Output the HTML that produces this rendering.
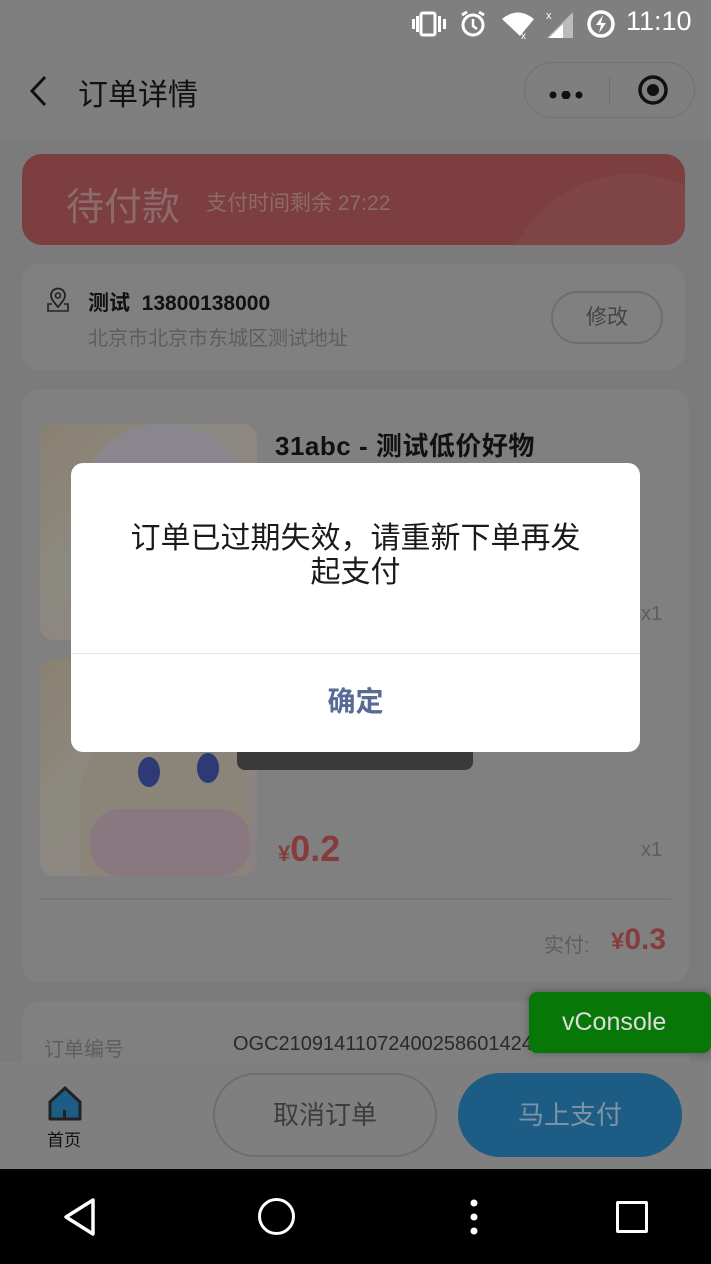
<!DOCTYPE html>
<html><head><meta charset="utf-8"><style>
*{margin:0;padding:0;box-sizing:border-box}
body{width:711px;height:1264px;overflow:hidden;position:relative;background:#7b7b7b;font-family:"Liberation Sans","Noto Sans CJK SC",sans-serif}
.a{position:absolute}
.card{position:absolute;background:#808080;border-radius:18px}
.img{position:absolute;border-radius:14px;background:linear-gradient(135deg,#8a8070 0%,#8c8a80 40%,#8a7f85 100%);overflow:hidden}
</style></head><body>
<div class="a" style="left:0;top:0;width:711px;height:140px;background:#7f7f7f"></div>
<!-- status bar -->
<div class="a" style="left:411px;top:10px;width:36px;height:28px">
<svg width="36" height="28" viewBox="0 0 36 28"><rect x="10" y="3" width="14" height="22" rx="2" fill="none" stroke="#fff" stroke-width="3"/><rect x="1" y="9" width="3" height="10" fill="#fff"/><rect x="5" y="6" width="3" height="16" fill="#fff"/><rect x="27" y="6" width="3" height="16" fill="#fff"/><rect x="32" y="9" width="3" height="10" fill="#fff"/></svg></div>
<div class="a" style="left:458px;top:9px"><svg width="30" height="30" viewBox="0 0 30 30"><circle cx="15" cy="16" r="10" fill="none" stroke="#fff" stroke-width="3"/><path d="M15 10v7l4 3" stroke="#fff" stroke-width="2.5" fill="none"/><path d="M4 6l5-3M26 6l-5-3" stroke="#fff" stroke-width="3"/></svg></div>
<div class="a" style="left:500px;top:10px"><svg width="36" height="30" viewBox="0 0 36 30"><path d="M2 9Q18-4 34 9L20 26Z" fill="#fff"/><text x="21" y="29" font-size="10" fill="#fff" font-family="Liberation Sans">x</text></svg></div>
<div class="a" style="left:545px;top:8px"><svg width="30" height="32" viewBox="0 0 30 32"><path d="M28 4V30H2Z" fill="#bbb"/><path d="M18 16V30H4Z" fill="#fff"/><text x="1" y="11" font-size="11" fill="#fff" font-family="Liberation Sans">x</text></svg></div>
<div class="a" style="left:586px;top:9px"><svg width="30" height="30" viewBox="0 0 30 30"><circle cx="15" cy="15" r="12" fill="none" stroke="#fff" stroke-width="3.5"/><path d="M17 6l-7 10h5l-2 8 7-10h-5z" fill="#fff"/></svg></div>
<div class="a" style="left:626px;top:6px;font-size:27px;color:#fff">11:10</div>
<!-- nav -->
<div class="a" style="left:28px;top:74px"><svg width="20" height="34" viewBox="0 0 20 34"><path d="M17 3L4 17l13 14" fill="none" stroke="#111" stroke-width="3"/></svg></div>
<div class="a" style="left:78px;top:70px;font-size:30px;color:#111">订单详情</div>
<div class="a" style="left:524px;top:62px;width:171px;height:56px;border:1px solid #727272;border-radius:28px"></div>
<div class="a" style="left:609px;top:75px;width:1px;height:30px;background:#727272"></div>
<div class="a" style="left:549px;top:86px"><svg width="36" height="8"><circle cx="4" cy="4" r="3.5" fill="#111"/><circle cx="17" cy="4" r="4.5" fill="#111"/><circle cx="30" cy="4" r="3.5" fill="#111"/></svg></div>
<div class="a" style="left:636px;top:73px"><svg width="34" height="34"><circle cx="17" cy="17" r="13" fill="none" stroke="#111" stroke-width="3.5"/><circle cx="17" cy="17" r="6" fill="#111"/></svg></div>
<!-- red banner -->
<div class="a" style="left:22px;top:154px;width:663px;height:91px;border-radius:20px;background:#7c3e3f;overflow:hidden"><div class="a" style="left:480px;top:20px;width:260px;height:260px;border-radius:50%;background:#7f4445"></div></div>
<div class="a" style="left:66px;top:176px;font-size:38px;color:#8e6b6b">待付款</div>
<div class="a" style="left:206px;top:187px;font-size:21px;color:#8e6b6b">支付时间剩余 27:22</div>
<!-- address -->
<div class="card" style="left:22px;top:264px;width:663px;height:106px"></div>
<div class="a" style="left:46px;top:287px"><svg width="24" height="26" viewBox="0 0 24 26"><path d="M12 20C6 13 5 11 5 8.5a7 7 0 0114 0C19 11 18 13 12 20z" fill="none" stroke="#222" stroke-width="1.8"/><circle cx="12" cy="8.5" r="2.5" fill="none" stroke="#222" stroke-width="1.6"/><path d="M6 17H2v7h20v-7h-4" fill="none" stroke="#222" stroke-width="1.6"/></svg></div>
<div class="a" style="left:88px;top:287px;font-size:21px;font-weight:bold;color:#111">测试&nbsp;&nbsp;13800138000</div>
<div class="a" style="left:88px;top:322px;font-size:20px;color:#5e5e5e">北京市北京市东城区测试地址</div>
<div class="a" style="left:551px;top:291px;width:112px;height:53px;border:2px solid #6e6e6e;border-radius:27px;font-size:21px;color:#444;text-align:center;line-height:49px">修改</div>
<!-- products -->
<div class="card" style="left:22px;top:389px;width:667px;height:593px"></div>
<div class="img" style="left:40px;top:424px;width:217px;height:216px"><div class="a" style="left:40px;top:0;width:170px;height:210px;border-radius:80px 80px 0 0;background:#89868d"></div></div>
<div class="img" style="left:40px;top:659px;width:217px;height:217px"><div class="a" style="left:40px;top:60px;width:170px;height:157px;background:#8b8478;border-radius:50% 50% 10px 10px"></div><div class="a" style="left:98px;top:98px;width:22px;height:30px;border-radius:50%;background:#2e3a75"></div><div class="a" style="left:157px;top:94px;width:22px;height:30px;border-radius:50%;background:#2e3a75"></div><div class="a" style="left:50px;top:150px;width:160px;height:67px;background:#8a7880;border-radius:30px"></div></div>
<div class="a" style="left:275px;top:426px;font-size:26px;font-weight:bold;color:#111;letter-spacing:0.5px">31abc - 测试低价好物</div>
<div class="a" style="left:641px;top:603px;font-size:20px;color:#5e5e5e">x1</div>
<div class="a" style="left:641px;top:839px;font-size:20px;color:#5e5e5e">x1</div>
<div class="a" style="left:278px;top:828px;color:#873c3c;font-weight:bold"><span style="font-size:22px">¥</span><span style="font-size:36px">0.2</span></div>
<div class="a" style="left:237px;top:748px;width:236px;height:22px;background:#3a3a3a;border-radius:0 0 8px 8px"></div>
<div class="a" style="left:40px;top:898px;width:631px;height:2px;background:#767676"></div>
<div class="a" style="left:544px;top:929px;font-size:20px;color:#5e5e5e">实付:</div>
<div class="a" style="left:611px;top:923px;color:#873c3c;font-weight:bold"><span style="font-size:24px">¥</span><span style="font-size:30px">0.3</span></div>
<!-- order number -->
<div class="card" style="left:22px;top:1001px;width:667px;height:120px"></div>
<div class="a" style="left:44px;top:1033px;font-size:20px;color:#5e5e5e">订单编号</div>
<div class="a" style="left:233px;top:1033px;font-size:20px;color:#2a2a2a">OGC21091411072400258601424</div>
<!-- bottom bar -->
<div class="a" style="left:0;top:1062px;width:711px;height:108px;background:#7f7f7f"></div>
<div class="a" style="left:47px;top:1086px"><svg width="36" height="36" viewBox="0 0 36 36"><path d="M3 16L18 2l15 14v17H3z" fill="#1d5d85" stroke="#222" stroke-width="3" stroke-linejoin="round"/><rect x="16" y="24" width="3" height="8" fill="#222"/></svg></div>
<div class="a" style="left:47px;top:1126px;font-size:17px;color:#111">首页</div>
<div class="a" style="left:213px;top:1073px;width:224px;height:84px;border:2px solid #6e6e6e;border-radius:42px;font-size:26px;color:#3d3d3d;text-align:center;line-height:80px">取消订单</div>
<div class="a" style="left:458px;top:1073px;width:224px;height:84px;background:#1d5d85;border-radius:42px;font-size:26px;color:#7e93a4;text-align:center;line-height:84px">马上支付</div>
<div class="a" style="left:529px;top:992px;width:182px;height:61px;background:#077707;border-radius:8px;font-size:25px;color:#ddd;line-height:60px;padding-left:33px;box-shadow:0 0 8px rgba(0,0,0,.3)">vConsole</div>
<!-- android nav -->
<div class="a" style="left:0;top:1169px;width:711px;height:95px;background:#000"></div>
<div class="a" style="left:62px;top:1197px"><svg width="34" height="40"><path d="M31 3L4 20l27 17z" fill="none" stroke="#fff" stroke-width="3.5" stroke-linejoin="round"/></svg></div>
<div class="a" style="left:258px;top:1198px;width:37px;height:37px;border:3.5px solid #fff;border-radius:50%"></div>
<div class="a" style="left:469px;top:1199px"><svg width="10" height="36"><circle cx="5" cy="4" r="3.5" fill="#fff"/><circle cx="5" cy="18" r="3.5" fill="#fff"/><circle cx="5" cy="32" r="3.5" fill="#fff"/></svg></div>
<div class="a" style="left:616px;top:1201px;width:32px;height:32px;border:3.5px solid #fff;border-radius:2px"></div>
<!-- dialog -->
<div class="a" style="left:71px;top:463px;width:569px;height:289px;background:#fff;border-radius:12px;overflow:hidden">
<div style="height:190px;padding:59px 20px 0;text-align:center;font-size:30px;line-height:34px;color:#1a1a1a">订单已过期失效，请重新下单再发<br>起支付</div>
<div style="height:1px;background:#e6e6e6"></div>
<div style="height:98px;text-align:center;line-height:96px;font-size:28px;font-weight:bold;color:#576b95">确定</div>
</div>
</body></html>
